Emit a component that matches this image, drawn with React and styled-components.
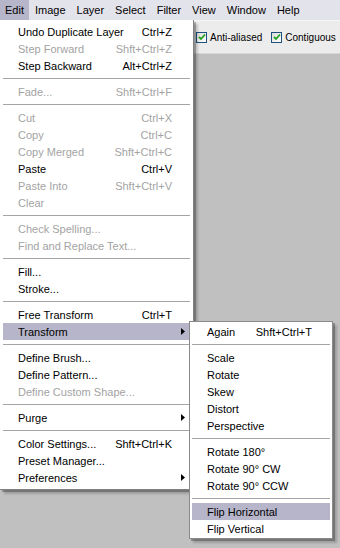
import styled, { createGlobalStyle } from 'styled-components';

const GlobalStyle = createGlobalStyle`
  html, body {
    margin: 0;
    padding: 0;
    background: #c0c0c0;
  }
  body {
    font-family: "Liberation Sans", Arial, sans-serif;
    font-size: 11px;
  }
`;

const editItems = [
  { label: 'Undo Duplicate Layer', key: 'Ctrl+Z' },
  { label: 'Step Forward', key: 'Shft+Ctrl+Z', disabled: true },
  { label: 'Step Backward', key: 'Alt+Ctrl+Z' },
  { sep: true },
  { label: 'Fade...', key: 'Shft+Ctrl+F', disabled: true },
  { sep: true },
  { label: 'Cut', key: 'Ctrl+X', disabled: true },
  { label: 'Copy', key: 'Ctrl+C', disabled: true },
  { label: 'Copy Merged', key: 'Shft+Ctrl+C', disabled: true },
  { label: 'Paste', key: 'Ctrl+V' },
  { label: 'Paste Into', key: 'Shft+Ctrl+V', disabled: true },
  { label: 'Clear', disabled: true },
  { sep: true },
  { label: 'Check Spelling...', disabled: true },
  { label: 'Find and Replace Text...', disabled: true },
  { sep: true },
  { label: 'Fill...' },
  { label: 'Stroke...' },
  { sep: true },
  { label: 'Free Transform', key: 'Ctrl+T' },
  { label: 'Transform', sub: true, active: true },
  { sep: true },
  { label: 'Define Brush...' },
  { label: 'Define Pattern...' },
  { label: 'Define Custom Shape...', disabled: true },
  { sep: true },
  { label: 'Purge', sub: true },
  { sep: true },
  { label: 'Color Settings...', key: 'Shft+Ctrl+K' },
  { label: 'Preset Manager...' },
  { label: 'Preferences', sub: true },
];

const transformItems = [
  { label: 'Again', key: 'Shft+Ctrl+T' },
  { sep: true },
  { label: 'Scale' },
  { label: 'Rotate' },
  { label: 'Skew' },
  { label: 'Distort' },
  { label: 'Perspective' },
  { sep: true },
  { label: 'Rotate 180°' },
  { label: 'Rotate 90° CW' },
  { label: 'Rotate 90° CCW' },
  { sep: true },
  { label: 'Flip Horizontal', active: true },
  { label: 'Flip Vertical' },
];

const menuNames = ['Edit', 'Image', 'Layer', 'Select', 'Filter', 'View', 'Window', 'Help'];

function Check() {
  return (
    <CheckBox>
      <svg width="8" height="8" viewBox="0 0 8 8">
        <path d="M1 4 L3 6 L7 1.5" stroke="#21a121" strokeWidth="1.8" fill="none" />
      </svg>
    </CheckBox>
  );
}

function MenuList({ items }) {
  return items.map((it, i) =>
    it.sep ? (
      <Separator key={i} />
    ) : (
      <Item key={i} $active={it.active} $disabled={it.disabled}>
        <Label>{it.label}</Label>
        {it.key && <Shortcut>{it.key}</Shortcut>}
        {it.sub && (
          <Arrow>
            <svg width="4" height="7" viewBox="0 0 4 7">
              <path d="M0 0 L4 3.5 L0 7 Z" fill="#000" />
            </svg>
          </Arrow>
        )}
      </Item>
    )
  );
}

export default function App() {
  return (
    <Screen>
      <GlobalStyle />
      <MenuBar>
        {menuNames.map((m) => (
          <MenuTitle key={m} $open={m === 'Edit'}>{m}</MenuTitle>
        ))}
      </MenuBar>
      <OptionsBar>
        <Option>
          <Check />
          Anti-aliased
        </Option>
        <Option>
          <Check />
          Contiguous
        </Option>
      </OptionsBar>
      <Workspace />

      <EditMenu>
        <MenuList items={editItems} />
      </EditMenu>
      <SubMenu>
        <MenuList items={transformItems} />
      </SubMenu>
    </Screen>
  );
}

const Screen = styled.div`
  position: relative;
  width: 340px;
  height: 548px;
  overflow: hidden;
  display: flex;
  flex-direction: column;
  background: #c0c0c0;
`;

const MenuBar = styled.div`
  height: 20px;
  display: flex;
  align-items: stretch;
  background: #e3e3eb;
  border-bottom: 1px solid #f6f6f6;
`;

const MenuTitle = styled.div`
  display: flex;
  align-items: center;
  padding: 0 5px 1px;
  margin-right: 1px;
  color: #000;
  font-size: 11px;
  background: ${(p) => (p.$open ? '#b7b5ca' : 'transparent')};
`;

const OptionsBar = styled.div`
  height: 32px;
  display: flex;
  align-items: center;
  gap: 9px;
  padding-left: 196px;
  background: #ececec;
  border-bottom: 1px solid #d6d6d6;
  white-space: nowrap;
`;

const Option = styled.label`
  display: flex;
  align-items: center;
  flex-shrink: 0;
  gap: 3px;
  font-size: 10px;
  color: #000;
`;

const CheckBox = styled.span`
  width: 11px;
  height: 11px;
  box-sizing: border-box;
  border: 1px solid #1c5180;
  background: linear-gradient(135deg, #dcdcd6, #ffffff);
  display: flex;
  align-items: center;
  justify-content: center;
`;

const Workspace = styled.div`
  flex: 1;
  background: #c0c0c0;
`;

const MenuPanel = styled.div`
  position: absolute;
  background: #fff;
  box-sizing: border-box;
  box-shadow: 2px 2px 0 rgba(0, 0, 0, 0.25), 4px 4px 2px rgba(0, 0, 0, 0.18);
  font-size: 11px;
`;

const EditMenu = styled(MenuPanel)`
  top: 20px;
  left: 0;
  width: 194px;
  padding: 3px;
  border-right: 1px solid #808080;
  border-bottom: 1px solid #808080;
`;

const SubMenu = styled(MenuPanel)`
  top: 321px;
  left: 189px;
  width: 144px;
  padding: 1px 2px;
  border: 1px solid #8a8a8a;
`;

const Item = styled.div`
  height: 17px;
  display: flex;
  align-items: center;
  padding-left: 15px;
  padding-right: 4px;
  color: ${(p) => (p.$disabled ? '#a3a3a3' : '#000')};
  background: ${(p) => (p.$active ? '#b7b5ca' : 'transparent')};
  white-space: nowrap;
`;

const Label = styled.span`
  flex: 1;
`;

const Shortcut = styled.span`
  margin-left: 12px;
  padding-right: 14px;
`;

const Arrow = styled.span`
  display: flex;
  align-items: center;
  padding-right: 1px;
`;

const Separator = styled.div`
  height: 9px;
  display: flex;
  align-items: center;

  &::before {
    content: '';
    flex: 1;
    height: 1px;
    background: #a5a5a5;
  }
`;
